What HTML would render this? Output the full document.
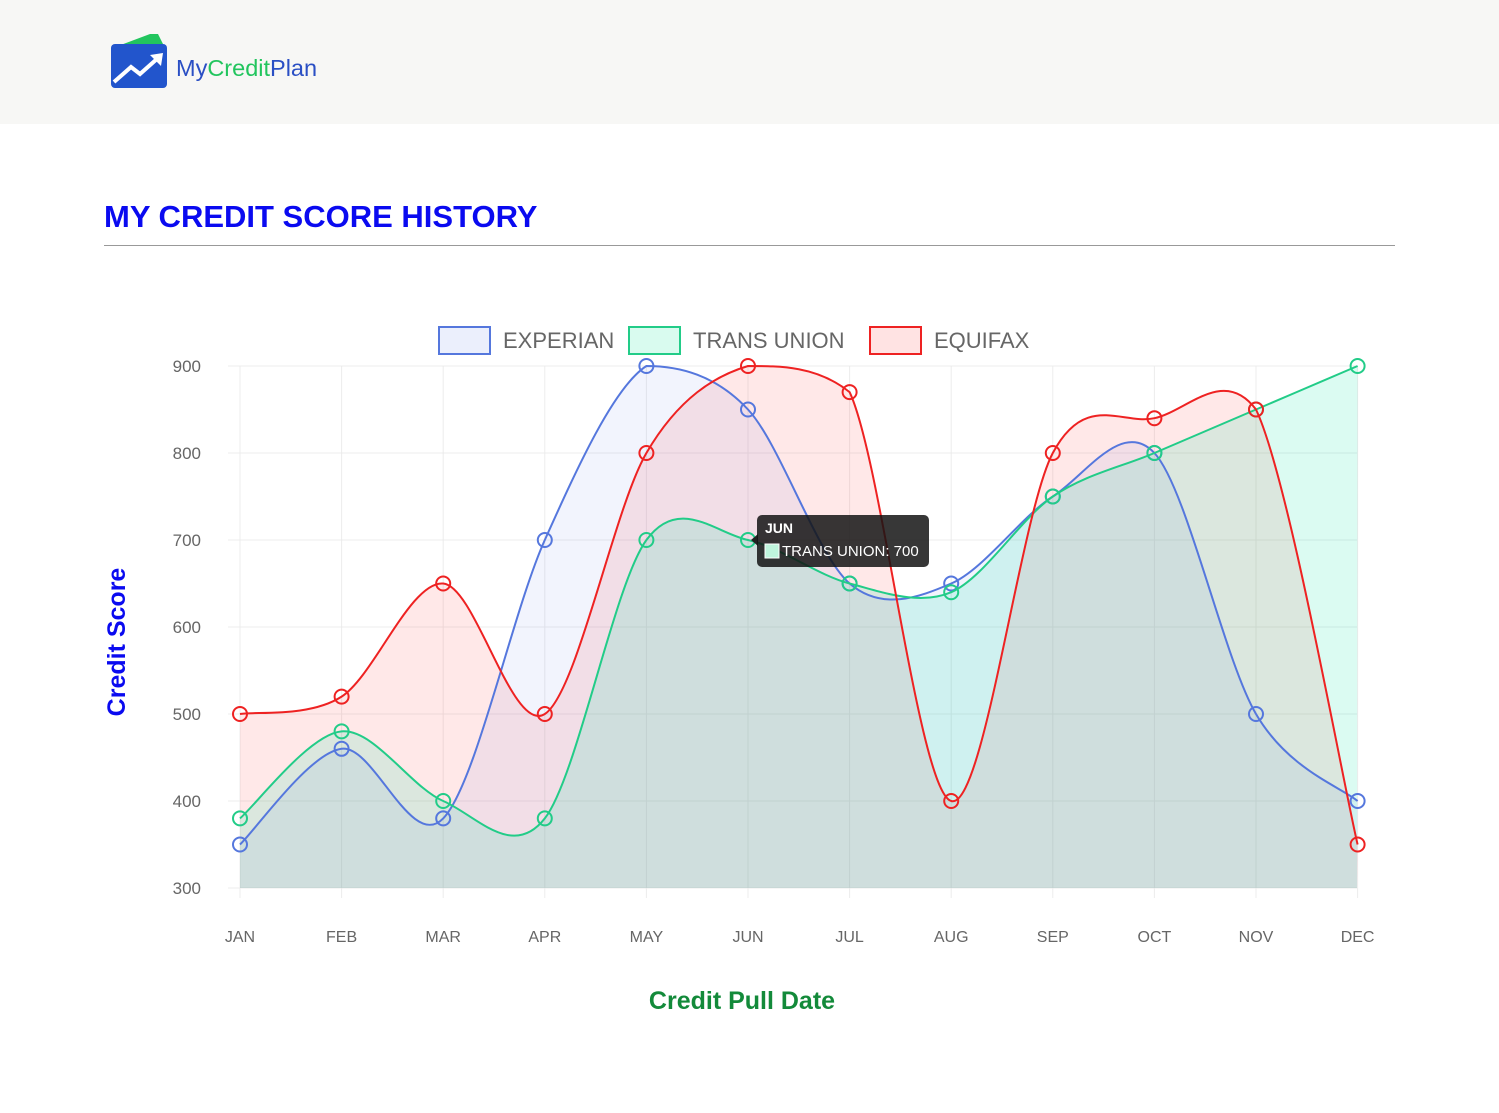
<!DOCTYPE html>
<html><head><meta charset="utf-8"><style>
body{margin:0;width:1499px;height:1113px;background:#fff;font-family:"Liberation Sans",sans-serif;position:relative;overflow:hidden}
.hdr{position:absolute;left:0;top:0;width:1499px;height:124px;background:#f7f7f5}
.brand{position:absolute;left:176px;top:55px;font-size:23.5px;color:#2a4fc4}
.brand b{color:#22c55e;font-weight:normal}
h1{position:absolute;left:104px;top:199px;margin:0;font-size:31px;font-weight:900;color:#0a0af0;letter-spacing:0px}
.rule{position:absolute;left:104px;top:245px;width:1291px;height:1px;background:#999}
svg{position:absolute;left:0;top:0}
</style></head><body>
<div class="hdr"></div>
<svg width="1499" height="1113" id="s">
<g>
<polygon points="118,46 150,34 158,34 164,46" fill="#22c55e"/>
<rect x="111" y="44" width="56" height="44" rx="4" fill="#2255cc"/>
<polyline points="114,82 131,67 140,74 158,58" fill="none" stroke="#fff" stroke-width="4"/>
<polygon points="150,55 163,53 161,66" fill="#fff"/>
</g>
</svg>
<div class="brand">My<b>Credit</b>Plan</div>
<h1>MY CREDIT SCORE HISTORY</h1>
<div class="rule"></div>
<script>
var s=document.getElementById('s'),h='';
function X(i){return 240+i*101.6}function Y(v){return 888-(v-300)*0.87}
for(var v=300;v<=900;v+=100){h+='<line x1="228" x2="1357" y1="'+Y(v)+'" y2="'+Y(v)+'" stroke="#ececec"/>';h+='<text x="201" y="'+(Y(v)+6)+'" text-anchor="end" font-size="17" fill="#666">'+v+'</text>'}
var m=['JAN','FEB','MAR','APR','MAY','JUN','JUL','AUG','SEP','OCT','NOV','DEC'];
for(var i=0;i<12;i++){h+='<line x1="'+X(i)+'" x2="'+X(i)+'" y1="366" y2="898" stroke="#ececec"/>';h+='<text x="'+X(i)+'" y="942" text-anchor="middle" font-size="16" fill="#666">'+m[i]+'</text>'}
function cl(y){return Math.max(366,Math.min(888,y))}
function path(d){var p=d.map(function(v,i){return[X(i),Y(v)]}),s='M'+p[0];for(var i=0;i<p.length-1;i++){var a=p[i-1]||p[i],b=p[i],c=p[i+1],e=p[i+2]||c,t=0.16;s+=' C'+(b[0]+(c[0]-a[0])*t)+','+cl(b[1]+(c[1]-a[1])*t)+' '+(c[0]-(e[0]-b[0])*t)+','+cl(c[1]-(e[1]-b[1])*t)+' '+c}return s}
var D=[[[350,460,380,700,900,850,650,650,750,800,500,400],'#5577dd','rgba(90,120,230,0.08)'],
[[380,480,400,380,700,700,650,640,750,800,850,900],'#22cc88','rgba(0,230,160,0.14)'],
[[500,520,650,500,800,900,870,400,800,840,850,350],'#ee2222','rgba(255,90,90,0.14)']];
[2,0,1].forEach(function(k){var d=D[k];h+='<path d="'+path(d[0])+' L1357,888 L240,888Z" fill="'+d[2]+'"/>'});
D.forEach(function(d){h+='<path d="'+path(d[0])+'" fill="none" stroke="'+d[1]+'" stroke-width="2"/>';d[0].forEach(function(v,i){h+='<circle cx="'+X(i)+'" cy="'+Y(v)+'" r="7" fill="none" stroke="'+d[1]+'" stroke-width="2"/>'})});
h+='<rect x="439" y="327" width="51" height="27" fill="rgba(90,120,230,0.12)" stroke="#5577dd" stroke-width="2"/><text x="503" y="348" font-size="22" fill="#666">EXPERIAN</text>';
h+='<rect x="629" y="327" width="51" height="27" fill="rgba(0,230,150,0.15)" stroke="#22cc88" stroke-width="2"/><text x="693" y="348" font-size="22" fill="#666">TRANS UNION</text>';
h+='<rect x="870" y="327" width="51" height="27" fill="rgba(255,90,90,0.17)" stroke="#ee2222" stroke-width="2"/><text x="934" y="348" font-size="22" fill="#666">EQUIFAX</text>';
h+='<polygon points="751,540 758,534 758,546" fill="#222"/><rect x="757" y="515" width="172" height="52" rx="5" fill="rgba(20,20,20,0.85)"/><text x="765" y="533" font-size="14" font-weight="bold" fill="#fff">JUN</text><rect x="765" y="544" width="14" height="14" fill="#bff5dd" stroke="#fff"/><text x="782" y="556" font-size="15" fill="#fff">TRANS UNION: 700</text>';
h+='<text transform="translate(125,642) rotate(-90)" text-anchor="middle" font-size="25" font-weight="bold" fill="#0a0af0">Credit Score</text>';
h+='<text x="742" y="1009" text-anchor="middle" font-size="25" font-weight="bold" fill="#138a3a">Credit Pull Date</text>';
s.insertAdjacentHTML('beforeend',h);
</script>
</body></html>
